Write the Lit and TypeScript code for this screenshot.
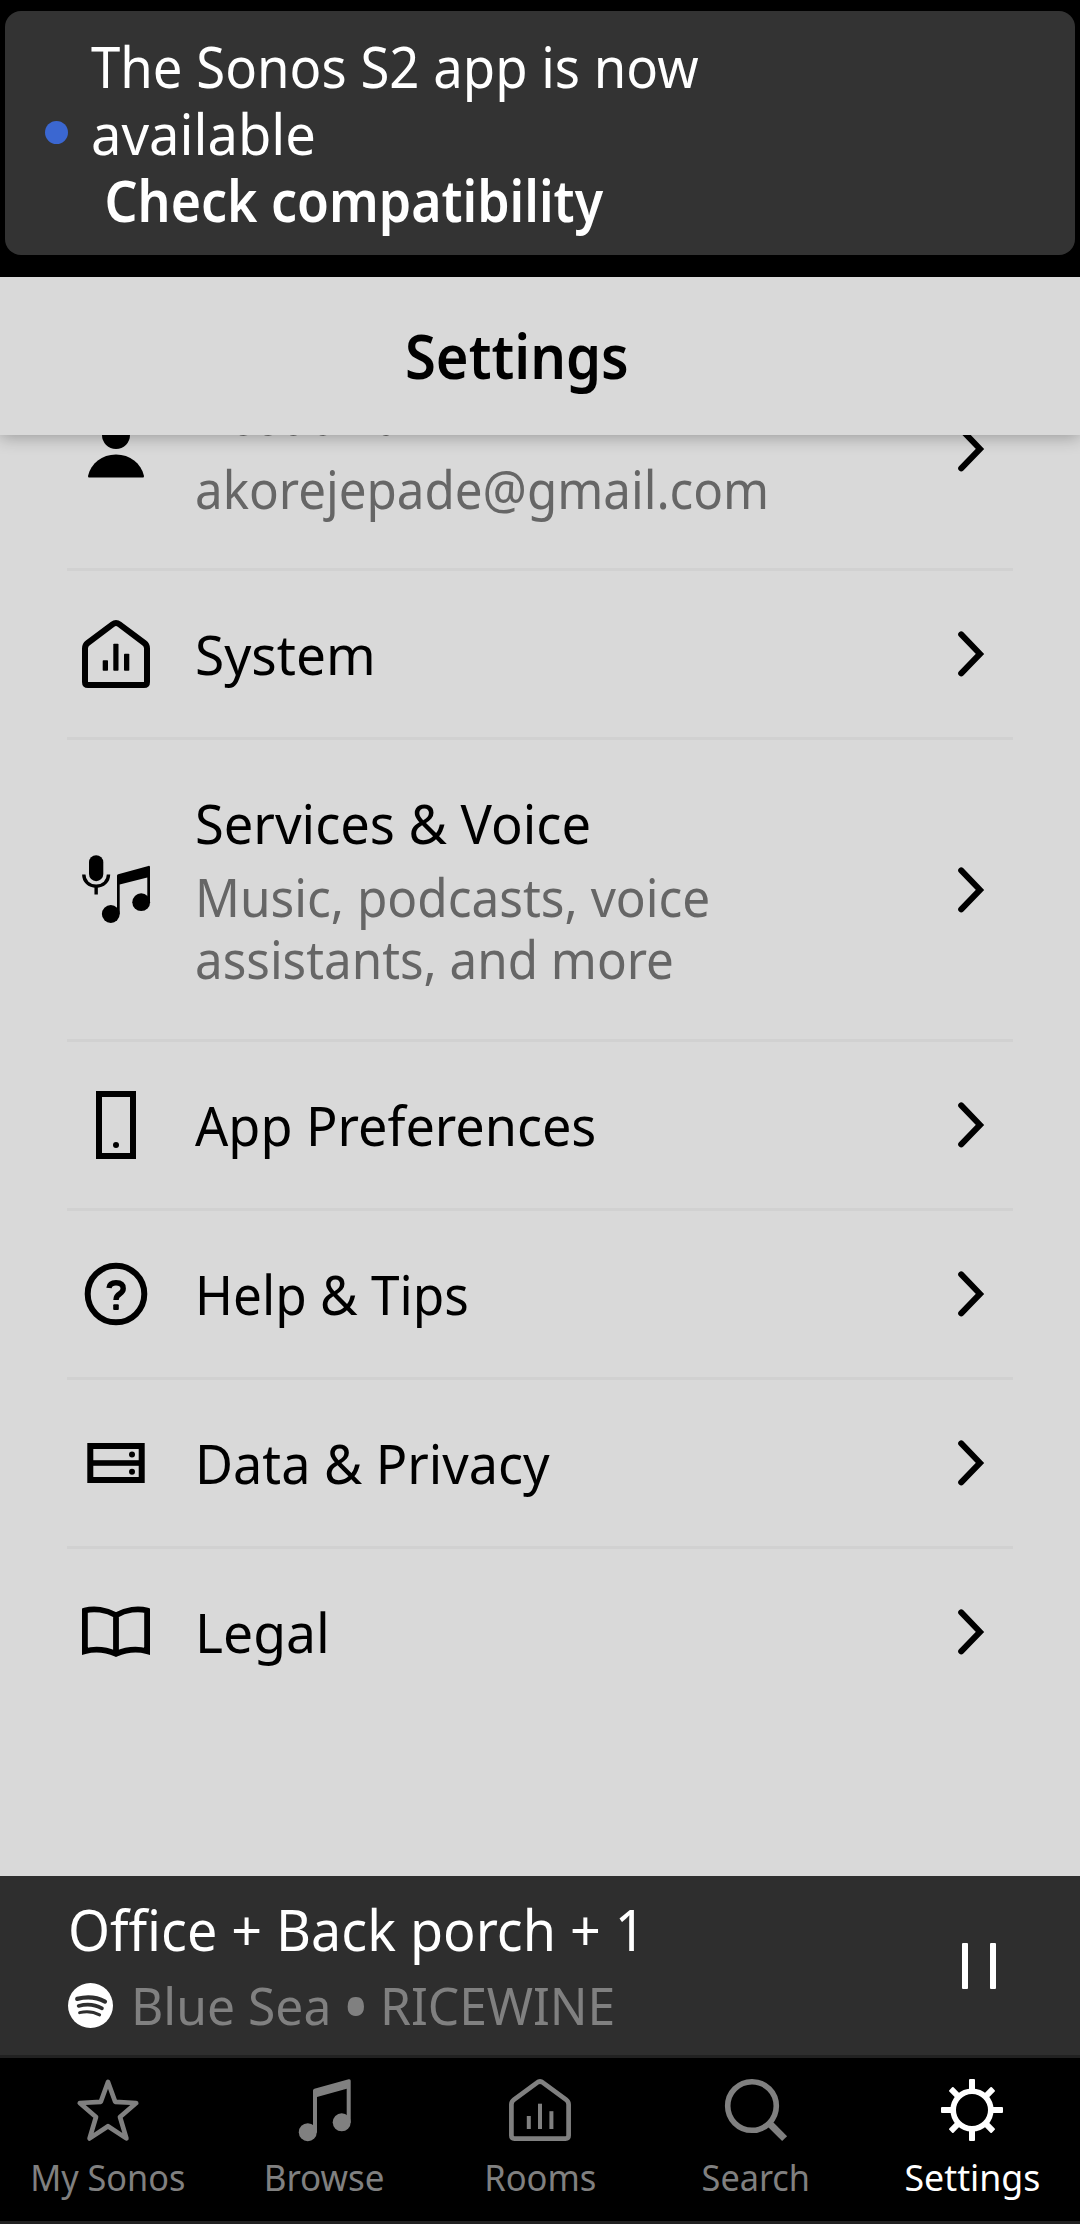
import { LitElement, html, css, svg, nothing, TemplateResult } from "lit";
import { customElement, property } from "lit/decorators.js";
import { classMap } from "lit/directives/class-map.js";
import { styleMap } from "lit/directives/style-map.js";

/** A run of text drawn slightly condensed by the given horizontal ratio. */
const run = (text: string | TemplateResult, ratio: number, cls = "") =>
  html`<span class="run ${cls}" style=${styleMap({ transform: `scaleX(${ratio})` })}>${text}</span>`;

const runStyles = css`
  .run {
    display: block;
    width: max-content;
    white-space: pre;
    transform-origin: 0 50%;
  }
`;

const rowIcons: Record<string, TemplateResult> = {
  account: svg`<circle cx="34" cy="20" r="14"/><path d="M6 61C9 48 20 39.5 34 39.5S59 48 62 61Q62 62.5 61 62.5H7Q6 62.5 6 61Z"/>`,
  system: svg`<path class="line" d="M3 62V28.5Q3 25 5.7 23L30.5 4.3Q34 1.7 37.5 4.3L62.3 23Q65 25 65 28.5V62Q65 65 62 65H6Q3 65 3 62Z"/>
    <rect x="20.7" y="40.3" width="5.3" height="10.4" rx=".8"/><rect x="31.3" y="23.7" width="5.2" height="27" rx=".8"/><rect x="42" y="33.7" width="5.3" height="17" rx=".8"/>`,
  services: svg`<g transform="translate(0 -.8)"><rect x="7" y="0" width="14.3" height="26" rx="7.15"/>
    <path class="line thin" d="M1.8 19.3C1.8 26 7 31 14.15 31S26.5 26 26.5 19.3M14.15 31V39.3"/>
    <path d="M35 20.5Q35 19.3 36.2 19L66.4 10.7Q68 10.4 68 12V47H65.3V22.3L37.7 29.3V59H35Z"/>
    <circle cx="28.8" cy="58.8" r="8.9"/><circle cx="59.2" cy="47" r="8.9"/></g>`,
  app: svg`<rect class="line" x="17" y="3" width="34" height="62"/><circle cx="34" cy="54" r="3"/>`,
  help: svg`<circle class="line" cx="34" cy="34" r="28.3"/>
    <path class="line mark" d="M27 28Q27.6 22.8 34 22.8Q41.2 22.8 41.2 28.6Q41.2 31.6 38 33.6Q34 36 34 40"/>
    <rect x="31.2" y="44.3" width="5.6" height="5.6" rx="1"/>`,
  data: svg`<rect class="line" x="8.3" y="17" width="51.4" height="34"/><rect x="8" y="31.2" width="52" height="5.6"/>
    <circle cx="50" cy="25.4" r="3"/><circle cx="50" cy="42.7" r="3"/>`,
  legal: svg`<path class="line sharp" d="M2.9 12.6C12 9.8 24 11.6 34 17.2C44 11.6 56 9.8 65.1 12.6V53.2C55 50.6 44 51.6 34 55.8C24 51.6 13 50.6 2.9 53.2ZM34 17V56"/>`,
};

const navIcons: Record<string, TemplateResult> = {
  star: svg`<path class="line" d="M31 3L38.2 22.8L59.2 24L43 38L49.4 59.4L31 47.2L12.6 59.4L19 38L2.8 24L23.8 22.8Z"/>`,
  note: svg`<path d="M20 11.6Q20 10.2 21.4 9.8L55.7 .2Q57.7 -.2 57.7 1.8V43.5H53.7V9.7L24 18V53.5H20Z"/>
    <circle cx="14.8" cy="53.2" r="9"/><circle cx="48.7" cy="43.3" r="9"/>`,
  rooms: svg`<path class="line" d="M2.4 56.5V25.5Q2.4 22.5 5 20.6L27.8 3.8Q31 1.2 34.2 3.8L57 20.6Q59.6 22.5 59.6 25.5V56.5Q59.6 59.6 56.5 59.6H5.5Q2.4 59.6 2.4 56.5Z"/>
    <rect x="17.8" y="37" width="4" height="13"/><rect x="29" y="24.7" width="4" height="25.3"/><rect x="40.4" y="32.2" width="4" height="17.8"/>`,
  search: svg`<circle class="line ring" cx="27" cy="27" r="24.3"/><path class="line handle" d="M44.5 44.5L59.6 59.6"/>`,
  gear: svg`<circle class="line ring" cx="31" cy="31" r="18.8"/>
    ${[0, 45, 90, 135, 180, 225, 270, 315].map(
      (a) => svg`<rect x="28" y=${a % 90 ? 0.9 : 0} width="6" height="11" rx="1" transform="rotate(${a} 31 31)"/>`
    )}`,
};

@customElement("update-banner")
export class UpdateBanner extends LitElement {
  static styles = [
    runStyles,
    css`
      :host {
        display: block;
        box-sizing: border-box;
        height: 277px;
        padding: 11px 5px 0;
        background: #000;
      }
      .card {
        box-sizing: border-box;
        height: 244px;
        border-radius: 16px;
        background: #333;
        color: #fff;
        display: flex;
        align-items: center;
        gap: 23px;
        padding: 0 40px;
      }
      .dot {
        width: 23px;
        height: 23px;
        border-radius: 50%;
        background: #3b67d1;
        margin-top: -1px;
      }
      .copy {
        font-size: 57.4px;
        line-height: 66.8px;
        padding-top: 1px;
      }
      .action {
        font-weight: 600;
        padding-left: 15px;
      }
    `,
  ];
  render() {
    return html`<div class="card">
      <span class="dot"></span>
      <div class="copy">
        ${run("The Sonos S2 app is now", 0.918)} ${run("available", 0.946)}
        ${run("Check compatibility", 0.903, "action")}
      </div>
    </div>`;
  }
}

@customElement("settings-row")
export class SettingsRow extends LitElement {
  @property() icon = "";
  @property({ attribute: false }) heading: [string, number] = ["", 1];
  @property({ attribute: false }) detail: [string, number][] = [];
  @property({ type: Boolean }) last = false;

  static styles = [
    runStyles,
    css`
      :host {
        display: block;
        padding: 0 67px;
      }
      .row {
        box-sizing: border-box;
        height: 169px;
        border-bottom: 3px solid #d1d1d1;
        display: flex;
        align-items: center;
        padding: 0 28px 0 15px;
      }
      .one {
        height: 241px;
      }
      .two {
        height: 302px;
      }
      .last {
        border-bottom-color: transparent;
      }
      svg {
        flex: none;
        overflow: visible;
      }
      .line {
        fill: none;
        stroke: #000;
        stroke-width: 6;
      }
      .thin {
        stroke-width: 3.4;
      }
      .mark {
        stroke-width: 5.4;
      }
      .sharp {
        stroke-width: 5.8;
      }
      .text {
        flex: 1;
        padding-left: 45px;
        font-size: 55px;
        line-height: 76px;
      }
      .detail {
        margin: 5px 0 4px;
        font-size: 52px;
        line-height: 62.5px;
        color: #666;
      }
      .one .detail {
        margin: 5.5px 0 2px;
      }
      .chevron {
        stroke-linecap: round;
      }
    `,
  ];
  render() {
    const n = this.detail.length;
    return html`<div class=${classMap({ row: true, one: n === 1, two: n === 2, last: this.last })}>
      <svg width="68" height="68" viewBox="0 0 68 68">${rowIcons[this.icon]}</svg>
      <div class="text">
        ${run(...this.heading)}
        ${n ? html`<div class="detail">${this.detail.map((d) => run(...d))}</div>` : nothing}
      </div>
      <svg width="28" height="46" viewBox="0 0 28 46"><path class="line chevron" d="M4.2 3.4L23 22.9L4.2 42.4"/></svg>
    </div>`;
  }
}

@customElement("now-playing")
export class NowPlaying extends LitElement {
  static styles = [
    runStyles,
    css`
      :host {
        box-sizing: border-box;
        height: 182px;
        background: #2e2e2e;
        border-bottom: 3px solid #212121;
        display: flex;
        justify-content: space-between;
        align-items: center;
        padding: 0 84px 0 68px;
      }
      .info {
        padding-top: 4px;
      }
      .room {
        font-size: 56px;
        line-height: 76px;
        color: #fff;
      }
      .track {
        display: flex;
        align-items: center;
        gap: 18px;
        height: 77px;
        font-size: 51.5px;
        line-height: 77px;
        color: #808080;
      }
      .bullet {
        font-size: 76px;
        line-height: 0;
        vertical-align: -10px;
        margin: 0 -2.5px;
      }
      .artist {
        letter-spacing: -0.1px;
      }
      .arc {
        fill: none;
        stroke: #2e2e2e;
        stroke-linecap: round;
      }
      .pause {
        display: flex;
        gap: 22px;
      }
      .bar {
        width: 6px;
        height: 46px;
        border-radius: 1px;
        background: #fff;
      }
    `,
  ];
  render() {
    return html`<div class="info">
        <div class="room">${run("Office + Back porch + 1", 0.962)}</div>
        <div class="track">
          <svg width="45" height="45" viewBox="0 0 45 45">
            <circle cx="22.5" cy="22.5" r="22.5" fill="#fff" />
            <path class="arc" stroke-width="4.2" d="M9.2 15.9Q24.5 12 37 18.6" />
            <path class="arc" stroke-width="3.6" d="M10.6 22.9Q23.5 19.4 34 25.4" />
            <path class="arc" stroke-width="3" d="M11.6 29.6Q22.5 27 31.6 31.9" />
          </svg>
          ${run(html`Blue Sea <span class="bullet">•</span> <span class="artist">RICEWINE</span>`, 0.967)}
        </div>
      </div>
      <div class="pause"><span class="bar"></span><span class="bar"></span></div>`;
  }
}

@customElement("tab-bar")
export class TabBar extends LitElement {
  static styles = [
    runStyles,
    css`
      :host {
        box-sizing: border-box;
        height: 166px;
        background: #000;
        border-bottom: 3px solid #212121;
        display: grid;
        grid-template-columns: repeat(5, 1fr);
      }
      .tab {
        display: flex;
        flex-direction: column;
        align-items: center;
        gap: 11px;
        padding-top: 21px;
        color: #808080;
        font-size: 36.5px;
        line-height: 50px;
      }
      .active {
        color: #fff;
      }
      .run {
        transform-origin: 50% 50%;
      }
      svg {
        fill: currentColor;
        overflow: visible;
      }
      .line {
        fill: none;
        stroke: currentColor;
        stroke-width: 4.7;
        stroke-linejoin: round;
      }
      .ring {
        stroke-width: 5.6;
      }
      .handle {
        stroke-width: 7;
      }
    `,
  ];
  private tabs: [string, string, number][] = [
    ["star", "My Sonos", 0.938],
    ["note", "Browse", 0.958],
    ["rooms", "Rooms", 0.947],
    ["search", "Search", 0.938],
    ["gear", "Settings", 0.979],
  ];
  render() {
    return this.tabs.map(
      ([icon, label, ratio]) => html`<div class=${classMap({ tab: true, active: label === "Settings" })}>
        <svg width="62" height="62" viewBox="0 0 62 62">${navIcons[icon]}</svg>
        ${run(label, ratio)}
      </div>`
    );
  }
}

@customElement("app-root")
export class AppRoot extends LitElement {
  static styles = [
    runStyles,
    css`
      :host {
        display: flex;
        flex-direction: column;
        width: 1080px;
        height: 2224px;
        overflow: hidden;
        background: #d9d9d9;
        color: #000;
        font-family: "Noto Sans", "Open Sans", sans-serif;
      }
      .header {
        flex: none;
        box-sizing: border-box;
        height: 158px;
        padding: 36px 0 0 405px;
        font-size: 62px;
        line-height: 84px;
        font-weight: 600;
        background: #d9d9d9;
        box-shadow: 0 2px 16px rgba(0, 0, 0, 0.3);
        z-index: 1;
      }
      .list {
        flex: 1;
        min-height: 0;
        overflow: hidden;
      }
      .scrolled {
        margin-top: -105px;
      }
    `,
  ];
  private rows: { icon: string; heading: [string, number]; detail?: [string, number][] }[] = [
    { icon: "account", heading: ["Account", 0.94], detail: [["akorejepade@gmail.com", 0.948]] },
    { icon: "system", heading: ["System", 0.967] },
    {
      icon: "services",
      heading: ["Services & Voice", 0.953],
      detail: [
        ["Music, podcasts, voice", 0.952],
        ["assistants, and more", 0.948],
      ],
    },
    { icon: "app", heading: ["App Preferences", 0.948] },
    { icon: "help", heading: ["Help & Tips", 0.933] },
    { icon: "data", heading: ["Data & Privacy", 0.948] },
    { icon: "legal", heading: ["Legal", 0.972] },
  ];
  render() {
    return html`<update-banner></update-banner>
      <div class="header">${run("Settings", 0.905)}</div>
      <div class="list">
        <div class="scrolled">
          ${this.rows.map(
            (r, i) => html`<settings-row
              .icon=${r.icon}
              .heading=${r.heading}
              .detail=${r.detail ?? []}
              .last=${i === this.rows.length - 1}
            ></settings-row>`
          )}
        </div>
      </div>
      <now-playing></now-playing>
      <tab-bar></tab-bar>`;
  }
}
